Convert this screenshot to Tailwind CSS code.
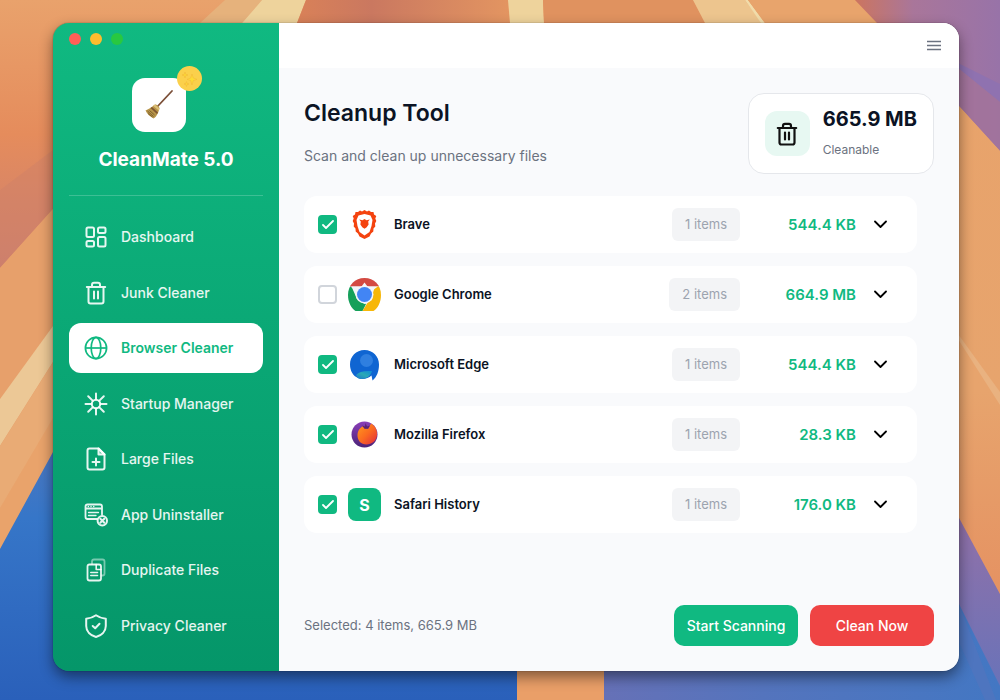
<!DOCTYPE html>
<html lang="en">
<head>
  <meta charset="UTF-8">
  <meta name="viewport" content="width=device-width, initial-scale=1.0">
  <title>CleanMate 5.0</title>
  <script src="https://cdn.jsdelivr.net/npm/@tailwindcss/browser@4"></script>
</head>
<body class="relative flex min-h-screen bg-[#e89a66] pt-[23px] pr-[41px] pb-[29px] pl-[53px] font-[Inter,sans-serif] text-sm text-[#0b1324]">

  <!-- Wallpaper -->
  <svg class="absolute inset-0 h-full w-full" viewBox="0 0 1000 700" preserveAspectRatio="none" aria-hidden="true">
    <defs>
      <linearGradient id="wpOrange" x1="0" y1="0" x2="0" y2="1">
        <stop offset="0" stop-color="#e9a26c"/><stop offset="0.5" stop-color="#e58c5c"/><stop offset="1" stop-color="#cc7f70"/>
      </linearGradient>
      <linearGradient id="wpBlue" x1="0" y1="0" x2="0" y2="1">
        <stop offset="0" stop-color="#5377bd"/><stop offset="0.35" stop-color="#3676c8"/><stop offset="1" stop-color="#2a60ba"/>
      </linearGradient>
      <linearGradient id="wpPurple" x1="0" y1="0" x2="0" y2="1">
        <stop offset="0" stop-color="#9a70a4"/><stop offset="1" stop-color="#6673ba"/>
      </linearGradient>
      <linearGradient id="wpBottom" x1="0" y1="0" x2="1" y2="0">
        <stop offset="0" stop-color="#6671b7"/><stop offset="0.4" stop-color="#5474bd"/><stop offset="1" stop-color="#4377c3"/>
      </linearGradient>
      <linearGradient id="wpCorner" x1="0" y1="0" x2="1" y2="0">
        <stop offset="0" stop-color="#cc755f"/><stop offset="0.4" stop-color="#a9769a"/><stop offset="1" stop-color="#9873a8"/>
      </linearGradient>
      <linearGradient id="wpRight" x1="0" y1="0" x2="0" y2="1">
        <stop offset="0" stop-color="#e8a36b"/><stop offset="0.6" stop-color="#e7a46d"/><stop offset="1" stop-color="#e59262"/>
      </linearGradient>
      <linearGradient id="wpTop" x1="0" y1="0" x2="1" y2="0">
        <stop offset="0" stop-color="#d98158"/><stop offset="0.35" stop-color="#ca7860"/><stop offset="1" stop-color="#e39561"/>
      </linearGradient>
    </defs>
    <path fill="url(#wpOrange)" d="M0 0H240L53 209L0 268Z"/>
    <path fill="#cf8069" opacity="0.45" d="M0 190L53 150V209L0 268Z"/>
    <path fill="#e7a06b" d="M0 268L53 209L214 23L240 0H262L242 23L53 326L0 399Z"/>
    <path fill="#ecc896" d="M0 399L53 326V362L0 446Z"/>
    <path fill="#e9ab75" d="M0 446L53 362V452L0 549Z"/>
    <path fill="#e8a066" opacity="0.7" d="M0 508L53 418V452L0 549Z"/>
    <path fill="#e6b27c" d="M225 0H262L242 23H200Z"/>
    <path fill="#eed39c" d="M262 0H306L297 23H242Z"/>
    <path fill="url(#wpTop)" d="M306 0H508L510 23H297Z"/>
    <path fill="#eed39c" d="M508 0H543L544 23H510Z"/>
    <path fill="#e0925f" d="M543 0H693L705 23H544Z"/>
    <path fill="#edc58e" d="M693 0H745L762 23H705Z"/>
    <path fill="#f1dcaa" d="M745 0H748L765 23H761Z"/>
    <path fill="#e8a46c" d="M748 0H855L877 23H765Z"/>
    <path fill="url(#wpCorner)" d="M855 0H1000V151L958 105L877 23Z"/>
    <path fill="#8f72b0" d="M958 63L1000 84V102L958 68Z"/>
    <path fill="#a47399" opacity="0.7" d="M958 68L1000 102V151L958 105Z"/>
    <path fill="url(#wpRight)" d="M940 85L958 105L1000 151V594L958 516L940 480Z"/>
    <path fill="#eab585" opacity="0.8" d="M958 334L1000 392V405L958 339Z"/>
    <path fill="url(#wpBlue)" d="M0 549L53 452L80 420V660H517V700H0Z"/>
    <path fill="#ea9f68" d="M517 660H604V700H517Z"/>
    <path fill="url(#wpPurple)" d="M940 480L958 516L1000 594V700H940Z"/>
    <path fill="url(#wpBottom)" d="M604 660H958V602L1000 686V700H604Z"/>
    <path fill="#5575bd" opacity="0.6" d="M958 640L985 700H996L958 602Z"/>
  </svg>

  <!-- App window -->
  <div class="relative flex flex-1 overflow-hidden rounded-2xl shadow-[0_6px_14px_rgba(0,0,0,0.45),0_0_1px_rgba(0,0,0,0.7)]">

    <!-- Sidebar -->
    <aside class="flex w-[226px] shrink-0 flex-col bg-linear-to-b from-[#10b981] to-[#059669] px-4 pt-[10px] pb-5">
      <div class="flex gap-[9px]">
        <span class="size-3 rounded-full bg-[#ff5f57]"></span>
        <span class="size-3 rounded-full bg-[#febc2e]"></span>
        <span class="size-3 rounded-full bg-[#28c840]"></span>
      </div>

      <div class="flex flex-col items-center border-b border-white/20 pt-[33px] pb-[21px]">
        <div class="relative mr-[14px] flex size-[54px] items-center justify-center rounded-[13px] bg-white">
          <svg class="size-8" viewBox="0 0 32 32" aria-hidden="true">
            <path d="M29 2L14 18" stroke="#7b4f38" stroke-width="1.8" stroke-linecap="round"/>
            <path d="M12 15.500C13.500 15 16.500 17.500 16.500 19.500L15 24C13.500 27 12 29 10.500 29.500C7.500 28 4 25 2.500 21.500C5 20.500 8.500 18.500 12 15.500Z" fill="#b8954a"/>
            <path d="M12 15.500L16.500 19.500L15.800 21.500L10 16.800Z" fill="#dcc078"/>
            <path d="M9 18L15 23.500L14 25L7.500 19Z" fill="#7f5530"/>
            <path d="M4.500 22L10.500 27.500M6.500 21.500L11.500 26M5 24.500L9.500 28" stroke="#6f5423" stroke-width="0.8"/>
          </svg>
          <span class="absolute -top-3 -right-4 flex size-[25px] items-center justify-center rounded-full bg-[#fbd04b]">
            <svg class="size-4" viewBox="0 0 16 16" aria-hidden="true">
              <g fill="#fddb35" stroke="#f3b53d" stroke-width="0.5">
                <path d="M10 3L11.300 7L15 8.300L11.300 9.600L10 14L8.700 9.600L5 8.300L8.700 7Z"/>
                <path d="M3 1L3.700 3.300L6 4L3.700 4.700L3 7L2.300 4.700L0 4L2.300 3.300Z"/>
                <path d="M4.500 10.500L5.100 12.400L7 13L5.100 13.600L4.500 15.500L3.900 13.600L2 13L3.900 12.400Z"/>
              </g>
            </svg>
          </span>
        </div>
        <h2 class="mt-[14px] text-[19px] leading-7 font-bold text-white">CleanMate 5.0</h2>
      </div>

      <nav class="mt-4 flex flex-1 flex-col justify-between font-medium text-white/90">
        <a href="#" class="flex h-[50px] items-center gap-3 rounded-xl px-[14px]">
          <svg class="size-[26px]" viewBox="0 0 26 26" fill="none" stroke="currentColor" stroke-width="2" aria-hidden="true">
            <rect x="3.500" y="3.500" width="7.500" height="9.500" rx="1.500"/><rect x="15" y="3.500" width="7.500" height="5.500" rx="1.500"/>
            <rect x="3.500" y="17" width="7.500" height="5.500" rx="1.500"/><rect x="15" y="13" width="7.500" height="9.500" rx="1.500"/>
          </svg>
          Dashboard
        </a>
        <a href="#" class="flex h-[50px] items-center gap-3 rounded-xl px-[14px]">
          <svg class="size-[26px]" viewBox="0 0 26 26" fill="none" stroke="currentColor" stroke-width="2" stroke-linecap="round" stroke-linejoin="round" aria-hidden="true">
            <path d="M3.800 7H22.200M5.500 7V21.500Q5.500 23.500 7.500 23.500H18.500Q20.500 23.500 20.500 21.500V7M9 7V5Q9 2.800 11 2.800H15Q17 2.800 17 5V7M11 11.500V18.500M15 11.500V18.500"/>
          </svg>
          Junk Cleaner
        </a>
        <a href="#" aria-current="page" class="flex h-[50px] items-center gap-3 rounded-xl bg-white px-[14px] font-semibold text-[#10b981]">
          <svg class="size-[26px]" viewBox="0 0 26 26" fill="none" stroke="currentColor" stroke-width="1.700" aria-hidden="true">
            <circle cx="13" cy="13" r="10.600"/><ellipse cx="13" cy="13" rx="4.800" ry="10.600"/><path d="M2.400 13H23.600"/>
          </svg>
          Browser Cleaner
        </a>
        <a href="#" class="flex h-[50px] items-center gap-3 rounded-xl px-[14px]">
          <svg class="size-[26px]" viewBox="0 0 26 26" fill="none" stroke="currentColor" stroke-width="2" stroke-linecap="round" aria-hidden="true">
            <circle cx="13" cy="13" r="4.200"/>
            <path d="M13 8.500V2.500M13 23.500V17.500M8.500 13H2.500M23.500 13H17.500M9.900 9.900L5.200 5.200M20.800 20.800L16.100 16.100M9.900 16.100L5.200 20.800M20.800 5.200L16.100 9.900"/>
          </svg>
          Startup Manager
        </a>
        <a href="#" class="flex h-[50px] items-center gap-3 rounded-xl px-[14px]">
          <svg class="size-[26px]" viewBox="0 0 26 26" fill="none" stroke="currentColor" stroke-width="2" stroke-linecap="round" stroke-linejoin="round" aria-hidden="true">
            <path d="M15.500 2.500H6.500Q4.500 2.500 4.500 4.500V21.500Q4.500 23.500 6.500 23.500H19.500Q21.500 23.500 21.500 21.500V8.500Z"/>
            <path d="M15.500 2.500V8.500H21.500Z" fill="currentColor" fill-opacity="0.4"/><path d="M13 12.500V19.500M9.500 16H16.500"/>
          </svg>
          Large Files
        </a>
        <a href="#" class="flex h-[50px] items-center gap-3 rounded-xl px-[14px]">
          <svg class="size-[26px]" viewBox="0 0 26 26" fill="none" stroke="currentColor" stroke-width="1.800" stroke-linecap="round" aria-hidden="true">
            <path d="M14 17H4.500Q2.500 17 2.500 15V4.500Q2.500 2.500 4.500 2.500H17Q19 2.500 19 4.500V12.500M2.500 6.500H19"/>
            <path d="M5.300 4.500H5.400M8 4.500H8.100M10.700 4.500H10.800" stroke-width="1.400"/>
            <path d="M5.500 10.500H15.500M5.500 13.500H13" stroke-width="1.300"/>
            <circle cx="19.300" cy="18.800" r="4.700" stroke-width="2"/><path d="M17.300 16.800L21.300 20.800M21.300 16.800L17.300 20.800" stroke-width="2"/>
          </svg>
          App Uninstaller
        </a>
        <a href="#" class="flex h-[50px] items-center gap-3 rounded-xl px-[14px]">
          <svg class="size-[26px]" viewBox="0 0 26 26" fill="none" stroke="currentColor" stroke-width="1.800" stroke-linecap="round" stroke-linejoin="round" aria-hidden="true">
            <path d="M9 7V4.500Q9 2.500 11 2.500H19.500Q21.500 2.500 21.500 4.500V16.500Q21.500 18.500 19.500 18.500H18.500" opacity="0.5"/>
            <path d="M13.500 7.500H6.500Q4.500 7.500 4.500 9.500V21.500Q4.500 23.500 6.500 23.500H16Q18 23.500 18 21.500V9.500Q18 7.500 16 7.500H13.500"/>
            <path d="M13.200 7.500V12.500H18M7.800 15.500H14.500M7.800 18.500H14.500" stroke-width="1.600"/>
          </svg>
          Duplicate Files
        </a>
        <a href="#" class="flex h-[50px] items-center gap-3 rounded-xl px-[14px]">
          <svg class="size-[26px]" viewBox="0 0 26 26" fill="none" stroke="currentColor" stroke-width="2" stroke-linecap="round" stroke-linejoin="round" aria-hidden="true">
            <path d="M13 2.200C10.500 4 7 5.200 3.200 5.800V13C3.200 18.500 7.500 22.500 13 24C18.500 22.500 22.800 18.500 22.800 13V5.800C19 5.200 15.500 4 13 2.200Z"/>
            <path d="M9.700 13L12.200 15.300L16.500 10.800"/>
          </svg>
          Privacy Cleaner
        </a>
      </nav>
    </aside>

    <!-- Main Content -->
    <main class="flex min-w-0 flex-1 flex-col bg-[#f9fafc]">
      <div class="flex h-[45px] items-center justify-end bg-white px-[18px]">
        <button type="button" aria-label="Menu" class="text-[#6b7280]">
          <svg class="size-[14px]" viewBox="0 0 14 14" stroke="currentColor" stroke-width="1.500" aria-hidden="true">
            <path d="M0 2.500H14M0 6.500H14M0 10.500H14"/>
          </svg>
        </button>
      </div>

      <div class="flex flex-1 flex-col px-[25px] py-[25px]">
        <!-- Page header -->
        <div class="flex items-start justify-between">
          <div class="pt-1">
            <h1 class="text-[23px] leading-8 font-semibold">Cleanup Tool</h1>
            <p class="mt-[17px] leading-5 text-[#6b7280]">Scan and clean up unnecessary files</p>
          </div>
          <div class="flex items-center gap-[13px] rounded-2xl border border-[#e5e7eb] bg-white px-4 py-[13px]">
            <span class="flex size-[45px] items-center justify-center rounded-xl bg-[#e7f8f2] text-[#111]">
              <svg class="size-[26px]" viewBox="0 0 26 26" fill="none" stroke="currentColor" stroke-width="2.200" stroke-linecap="round" stroke-linejoin="round" aria-hidden="true">
                <path d="M3.800 7H22.200M5.500 7V21.500Q5.500 23.500 7.500 23.500H18.500Q20.500 23.500 20.500 21.500V7M9 7V5Q9 2.800 11 2.800H15Q17 2.800 17 5V7M11 11.500V18.500M15 11.500V18.500"/>
              </svg>
            </span>
            <div>
              <div class="text-xl leading-6 font-bold">665.9 MB</div>
              <div class="mt-[9px] text-xs leading-5 text-[#6b7280]">Cleanable</div>
            </div>
          </div>
        </div>

        <!-- Browser list -->
        <ul class="mt-[22px] mr-[17px] flex flex-col gap-[13px]">
          <li class="flex h-[57px] items-center rounded-[13px] bg-white pr-[30px] pl-[14px]">
            <span class="grid place-items-center">
              <input id="brave" type="checkbox" checked class="col-start-1 row-start-1 size-[19px] appearance-none rounded-sm border-2 border-[#d1d5db] bg-white checked:border-[#10b981] checked:bg-[#10b981]">
              <svg class="pointer-events-none col-start-1 row-start-1 size-3" viewBox="0 0 12 12" fill="none" stroke="#fff" stroke-width="1.800" stroke-linecap="round" stroke-linejoin="round" aria-hidden="true"><path d="M1 6L4 9L11 2"/></svg>
            </span>
            <svg class="ml-[11px] size-[33px]" viewBox="0 0 33 33" aria-hidden="true">
              <path d="M10 4L12 2.500L14 3.500L16.500 2L19 3.500L21 2.500L23 4L25.500 4L26 6.500L28.300 8L27.300 10.500L28.300 13L27 15.500L27.300 18.500L25.500 20.500L25.300 23.500L23 25.500L21.500 28.500L16.500 31L11.500 28.500L10 25.500L7.700 23.500L7.500 20.500L5.700 18.500L6 15.500L4.700 13L5.700 10.500L4.700 8L7 6.500L7.500 4Z" fill="#f4430f"/>
              <path d="M10.500 7.500L16.500 6L22.500 7.500L24.500 12L23.500 18L21.500 24L16.500 27.500L11.500 24L9.500 18L8.500 12Z" fill="#fff"/>
              <path d="M11.200 11.500L14.500 12.300L16.500 11L18.500 12.300L21.800 11.500L20.200 13.600L20.600 16.500L18.700 19.300L16.500 20.800L14.300 19.300L12.400 16.500L12.800 13.600Z" fill="#f4430f"/>
            </svg>
            <label for="brave" class="ml-[13px] flex-1 text-[13px] font-semibold">Brave</label>
            <span class="rounded-md bg-[#f3f4f6] px-[13px] py-[6px] text-[13px] leading-[21px] text-[#9ca3af]">1 items</span>
            <span class="w-[116px] text-right text-[15px] font-semibold text-[#10b981]">544.4 KB</span>
            <button type="button" aria-label="Show Brave items" class="ml-[18px]">
              <svg class="size-[13px]" viewBox="0 0 13 13" fill="none" stroke="#000" stroke-width="1.800" stroke-linecap="round" stroke-linejoin="round" aria-hidden="true"><path d="M1 3.500L6.500 9L12 3.500"/></svg>
            </button>
          </li>

          <li class="flex h-[57px] items-center rounded-[13px] bg-white pr-[30px] pl-[14px]">
            <span class="grid place-items-center">
              <input id="chrome" type="checkbox" class="size-[19px] appearance-none rounded-sm border-2 border-[#d1d5db] bg-white checked:border-[#10b981] checked:bg-[#10b981]">
            </span>
            <svg class="ml-[11px] size-[33px]" viewBox="0 0 33 33" aria-hidden="true">
              <clipPath id="chromeClip"><path d="M0 17C0 7 7 0 16.500 0S33 7 33 17C33 24 30 30 25.500 33H7.500C3 30 0 24 0 17Z"/></clipPath>
              <g clip-path="url(#chromeClip)">
                <path d="M0 0H33V33H0Z" fill="#eef1f4"/>
                <path d="M0 0H33V8.500H0Z" fill="#d44a42"/>
                <path d="M0 7L4.500 10L11.500 22.500L18 26L14.500 33H0Z" fill="#15a05a"/>
                <path d="M27 8.500H33V33H14.500L20 24L24 18Z" fill="#f7b708"/>
                <path d="M3.500 8.500H13.500L16.500 4.500L19.500 8.500H30L25 12L24 22L16.500 26L9 21Z" fill="#f3f5f8"/>
              </g>
              <circle cx="16.500" cy="16.500" r="9" fill="#f3f5f8"/>
              <circle cx="16.500" cy="16.500" r="7.500" fill="#4285f4"/>
            </svg>
            <label for="chrome" class="ml-[13px] flex-1 text-[13px] font-semibold">Google Chrome</label>
            <span class="rounded-md bg-[#f3f4f6] px-[13px] py-[6px] text-[13px] leading-[21px] text-[#9ca3af]">2 items</span>
            <span class="w-[116px] text-right text-[15px] font-semibold text-[#10b981]">664.9 MB</span>
            <button type="button" aria-label="Show Google Chrome items" class="ml-[18px]">
              <svg class="size-[13px]" viewBox="0 0 13 13" fill="none" stroke="#000" stroke-width="1.800" stroke-linecap="round" stroke-linejoin="round" aria-hidden="true"><path d="M1 3.500L6.500 9L12 3.500"/></svg>
            </button>
          </li>

          <li class="flex h-[57px] items-center rounded-[13px] bg-white pr-[30px] pl-[14px]">
            <span class="grid place-items-center">
              <input id="edge" type="checkbox" checked class="col-start-1 row-start-1 size-[19px] appearance-none rounded-sm border-2 border-[#d1d5db] bg-white checked:border-[#10b981] checked:bg-[#10b981]">
              <svg class="pointer-events-none col-start-1 row-start-1 size-3" viewBox="0 0 12 12" fill="none" stroke="#fff" stroke-width="1.800" stroke-linecap="round" stroke-linejoin="round" aria-hidden="true"><path d="M1 6L4 9L11 2"/></svg>
            </span>
            <svg class="ml-[11px] size-[33px]" viewBox="0 0 33 33" aria-hidden="true">
              <linearGradient id="edgeTeal" x1="0" y1="1" x2="1" y2="0"><stop offset="0" stop-color="#1b76cf"/><stop offset="0.5" stop-color="#2aa9b5"/><stop offset="1" stop-color="#0c8ad8"/></linearGradient>
              <path d="M16.500 2C25 2 31 8.500 31 16.500C31 23 29 29 24.500 32.500L23.500 27.500C20 31 14 32 10 30C5 28 2 22.500 2 16.500C2 8.500 8 2 16.500 2Z" fill="#0f65d2"/>
              <circle cx="18.500" cy="12.500" r="6.500" fill="#2f7fe0"/>
              <path d="M8 27C11 23.500 16 22.500 24 23C23 28 18 31 13 31C11 31 9 30 8 27Z" fill="url(#edgeTeal)"/>
            </svg>
            <label for="edge" class="ml-[13px] flex-1 text-[13px] font-semibold">Microsoft Edge</label>
            <span class="rounded-md bg-[#f3f4f6] px-[13px] py-[6px] text-[13px] leading-[21px] text-[#9ca3af]">1 items</span>
            <span class="w-[116px] text-right text-[15px] font-semibold text-[#10b981]">544.4 KB</span>
            <button type="button" aria-label="Show Microsoft Edge items" class="ml-[18px]">
              <svg class="size-[13px]" viewBox="0 0 13 13" fill="none" stroke="#000" stroke-width="1.800" stroke-linecap="round" stroke-linejoin="round" aria-hidden="true"><path d="M1 3.500L6.500 9L12 3.500"/></svg>
            </button>
          </li>

          <li class="flex h-[57px] items-center rounded-[13px] bg-white pr-[30px] pl-[14px]">
            <span class="grid place-items-center">
              <input id="firefox" type="checkbox" checked class="col-start-1 row-start-1 size-[19px] appearance-none rounded-sm border-2 border-[#d1d5db] bg-white checked:border-[#10b981] checked:bg-[#10b981]">
              <svg class="pointer-events-none col-start-1 row-start-1 size-3" viewBox="0 0 12 12" fill="none" stroke="#fff" stroke-width="1.800" stroke-linecap="round" stroke-linejoin="round" aria-hidden="true"><path d="M1 6L4 9L11 2"/></svg>
            </span>
            <svg class="ml-[11px] size-[33px]" viewBox="0 0 33 33" aria-hidden="true">
              <linearGradient id="ffPurple" x1="0" y1="0" x2="0" y2="1"><stop offset="0" stop-color="#8a3fb8"/><stop offset="1" stop-color="#4a2377"/></linearGradient>
              <linearGradient id="ffOrange" x1="0" y1="0" x2="1" y2="1"><stop offset="0" stop-color="#ff9a1f"/><stop offset="0.5" stop-color="#fb6a20"/><stop offset="1" stop-color="#e02840"/></linearGradient>
              <circle cx="16.500" cy="16.500" r="13" fill="url(#ffPurple)"/>
              <path d="M23 5.500C27.500 8 29.500 12.500 29 17C28.500 23 23.500 26.500 18.500 26.500C13 26.500 9.500 22.500 9.500 17.500C9.500 12.500 12.500 9 15.500 8L17 10.500H20.500Z" fill="url(#ffOrange)"/>
              <path d="M14 7.500L17 8.500L17.500 5L19 8.500L22 7.500L20 10.800H16.500Z" fill="#5b2470"/>
            </svg>
            <label for="firefox" class="ml-[13px] flex-1 text-[13px] font-semibold">Mozilla Firefox</label>
            <span class="rounded-md bg-[#f3f4f6] px-[13px] py-[6px] text-[13px] leading-[21px] text-[#9ca3af]">1 items</span>
            <span class="w-[116px] text-right text-[15px] font-semibold text-[#10b981]">28.3 KB</span>
            <button type="button" aria-label="Show Mozilla Firefox items" class="ml-[18px]">
              <svg class="size-[13px]" viewBox="0 0 13 13" fill="none" stroke="#000" stroke-width="1.800" stroke-linecap="round" stroke-linejoin="round" aria-hidden="true"><path d="M1 3.500L6.500 9L12 3.500"/></svg>
            </button>
          </li>

          <li class="flex h-[57px] items-center rounded-[13px] bg-white pr-[30px] pl-[14px]">
            <span class="grid place-items-center">
              <input id="safari" type="checkbox" checked class="col-start-1 row-start-1 size-[19px] appearance-none rounded-sm border-2 border-[#d1d5db] bg-white checked:border-[#10b981] checked:bg-[#10b981]">
              <svg class="pointer-events-none col-start-1 row-start-1 size-3" viewBox="0 0 12 12" fill="none" stroke="#fff" stroke-width="1.800" stroke-linecap="round" stroke-linejoin="round" aria-hidden="true"><path d="M1 6L4 9L11 2"/></svg>
            </span>
            <span class="ml-[11px] flex size-[33px] items-center justify-center rounded-lg bg-[#10b981] text-base font-bold text-white">S</span>
            <label for="safari" class="ml-[13px] flex-1 text-[13px] font-semibold">Safari History</label>
            <span class="rounded-md bg-[#f3f4f6] px-[13px] py-[6px] text-[13px] leading-[21px] text-[#9ca3af]">1 items</span>
            <span class="w-[116px] text-right text-[15px] font-semibold text-[#10b981]">176.0 KB</span>
            <button type="button" aria-label="Show Safari History items" class="ml-[18px]">
              <svg class="size-[13px]" viewBox="0 0 13 13" fill="none" stroke="#000" stroke-width="1.800" stroke-linecap="round" stroke-linejoin="round" aria-hidden="true"><path d="M1 3.500L6.500 9L12 3.500"/></svg>
            </button>
          </li>
        </ul>

        <!-- Footer actions -->
        <div class="mt-auto flex items-center gap-3">
          <p class="flex-1 text-[13px] text-[#6b7280]">Selected: 4 items, 665.9 MB</p>
          <button type="button" class="h-[41px] w-[124px] rounded-[10px] bg-[#10b981] font-medium text-white">Start Scanning</button>
          <button type="button" class="h-[41px] w-[124px] rounded-[10px] bg-[#ef4444] font-medium text-white">Clean Now</button>
        </div>
      </div>
    </main>
  </div>

</body>
</html>
